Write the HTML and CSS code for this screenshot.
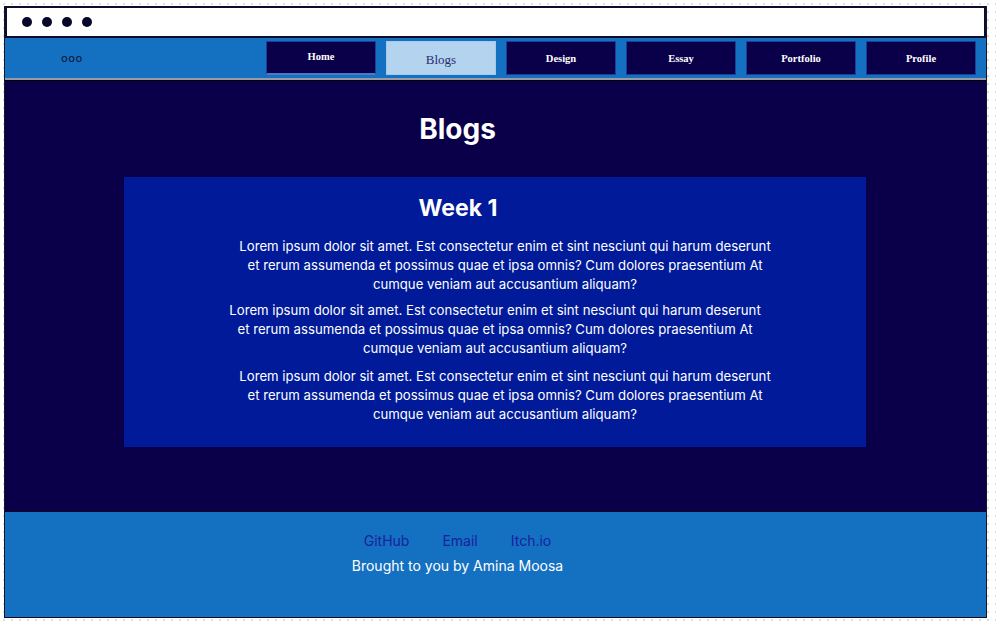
FILE: index.html
```html
<!DOCTYPE html>
<html lang="en">
<head>
<meta charset="utf-8">
<title>Blogs</title>
<link rel="stylesheet" href="styles.css">
</head>
<body>
<div class="frame">
  <div class="chrome">
    <span class="dot"></span><span class="dot"></span><span class="dot"></span><span class="dot"></span>
  </div>
  <nav class="nav">
    <div class="logo">ooo</div>
    <ul class="menu">
      <li><a class="btn btn-home" href="#">Home</a></li>
      <li><a class="btn active" href="#">Blogs</a></li>
      <li><a class="btn" href="#">Design</a></li>
      <li><a class="btn" href="#">Essay</a></li>
      <li><a class="btn" href="#">Portfolio</a></li>
      <li><a class="btn" href="#">Profile</a></li>
    </ul>
  </nav>
  <main class="main">
    <h1 class="title">Blogs</h1>
    <section class="card">
      <h2 class="week">Week 1</h2>
      <p class="para p1">Lorem ipsum dolor sit amet. Est consectetur enim et sint nesciunt qui harum deserunt et rerum assumenda et possimus quae et ipsa omnis? Cum dolores praesentium At cumque veniam aut accusantium aliquam?</p>
      <p class="para p2">Lorem ipsum dolor sit amet. Est consectetur enim et sint nesciunt qui harum deserunt et rerum assumenda et possimus quae et ipsa omnis? Cum dolores praesentium At cumque veniam aut accusantium aliquam?</p>
      <p class="para p3">Lorem ipsum dolor sit amet. Est consectetur enim et sint nesciunt qui harum deserunt et rerum assumenda et possimus quae et ipsa omnis? Cum dolores praesentium At cumque veniam aut accusantium aliquam?</p>
    </section>
  </main>
  <footer class="footer">
    <div class="links">
      <a href="#">GitHub</a>
      <a href="#">Email</a>
      <a href="#">Itch.io</a>
    </div>
    <p class="credit">Brought to you by Amina Moosa</p>
  </footer>
</div>
</body>
</html>
```
FILE: styles.css
```css
* { box-sizing: border-box; }

html, body { height: 100%; }

body {
  margin: 0;
  background-color: #ffffff;
  background-image: radial-gradient(circle, #dcdcdc 1px, transparent 1.3px);
  background-size: 8px 8px;
  background-position: 0 0;
  font-family: "Inter", "Noto Sans", sans-serif;
}

.frame {
  margin: 6px 0 0 4px;
  width: 983px;
  border-left: 1px solid #15152a;
  border-right: 1px solid #15152a;
}

.chrome {
  height: 32px;
  background: #ffffff;
  border: 2px solid #0d0d2e;
  display: flex;
  align-items: center;
  gap: 10px;
  padding-left: 15px;
}

.dot {
  width: 10px;
  height: 10px;
  border-radius: 50%;
  background: #07072a;
}

.nav {
  height: 42px;
  background: #1470c0;
  border-bottom: 2px solid #9a9aa6;
  display: flex;
  align-items: center;
}

.logo {
  width: 261px;
  padding-left: 56px;
  font-family: "DejaVu Sans", sans-serif;
  font-size: 11px;
  color: #0d1030;
  letter-spacing: 0.5px;
  margin-top: 1px;
}

.menu {
  list-style: none;
  margin: 0;
  padding: 0;
  display: flex;
  gap: 10px;
}

.btn {
  display: flex;
  align-items: center;
  justify-content: center;
  width: 110px;
  height: 34px;
  background: #0a0049;
  border: 1px solid #1e3e96;
  color: #ffffff;
  font-family: "Liberation Serif", "DejaVu Serif", serif;
  font-size: 10.5px;
  font-weight: bold;
  text-decoration: none;
}

.btn-home {
  align-items: flex-start;
  padding-top: 9px;
  border-bottom: 2px solid #4d78c8;
}

.btn.active {
  background: #b3d3ee;
  border-color: #a9c8e8;
  color: #2a2a70;
  font-weight: normal;
  font-size: 13px;
  align-items: flex-end;
  padding-bottom: 6px;
}

.main {
  background: #0a0049;
  height: 431px;
  padding-top: 29px;
  border-top: 1px solid #000;
}

.title {
  margin: 0 0 29px 0;
  padding-right: 76px;
  text-align: center;
  color: #ffffff;
  font-size: 28px;
  font-weight: 700;
  line-height: 38px;
}

.card {
  margin: 0 0 0 119px;
  width: 742px;
  height: 270px;
  background: #001a99;
  padding-top: 15px;
}

.week {
  margin: 0 0 13px 0;
  padding-right: 74px;
  text-align: center;
  color: #ffffff;
  font-size: 23px;
  font-weight: 700;
  line-height: 32px;
}

.para {
  margin: 0 auto 7px;
  width: 540px;
  text-align: center;
  color: #ffffff;
  font-size: 13.2px;
  line-height: 19px;
}

.p1 { position: relative; left: 10px; }
.p3 { position: relative; left: 10px; margin-top: 9px; }

.footer {
  background: #1470c0;
  height: 107px;
  border-top: 1px solid #0a0a20;
  border-bottom: 1px solid #0a0a20;
  padding-top: 19px;
  text-align: center;
  padding-right: 76px;
}

.links {
  display: flex;
  justify-content: center;
  gap: 33px;
}

.links a {
  color: #1722a0;
  text-decoration: none;
  font-size: 14px;
  line-height: 20px;
}

.credit {
  margin: 5px 0 0 0;
  color: #ffffff;
  font-size: 14px;
  line-height: 20px;
}
```
